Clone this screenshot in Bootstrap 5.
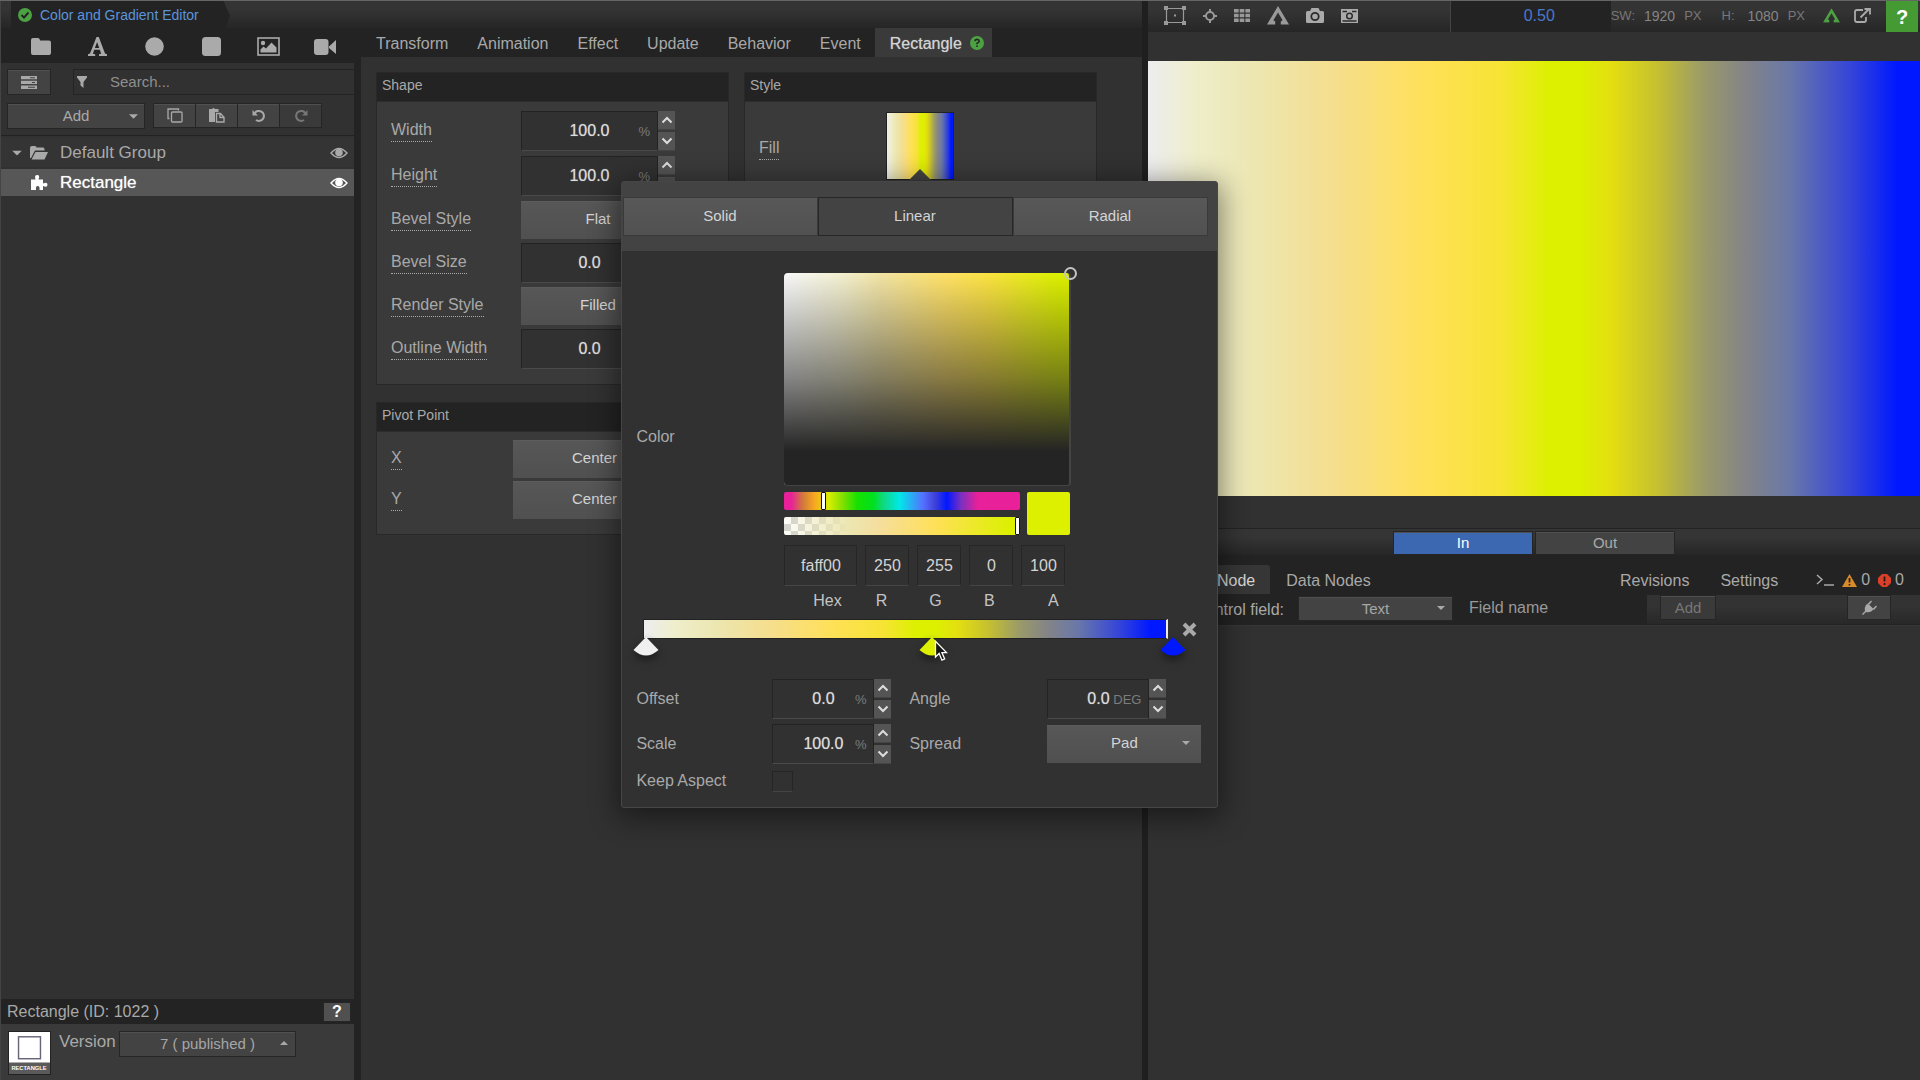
<!DOCTYPE html>
<html lang="en">
<head>
<meta charset="utf-8">
<meta name="viewport" content="width=device-width, initial-scale=1">
<title>Color and Gradient Editor</title>
<link href="https://cdn.jsdelivr.net/npm/bootstrap@5.3.0/dist/css/bootstrap.min.css" rel="stylesheet">
<style>
:root{--deep:#232323;--base:#313131;--panel:#3a3a3a;--line:#1f1f1f;--txt:#a9a9a9;--lite:#d4d4d4;
--ramp:linear-gradient(90deg,#ededf0 0,#efeecb 6%,#ece6b0 14%,#f5de8e 24%,#ffe058 36%,#f6e433 46%,#dcf000 52%,#dcf000 56%,#e4df10 60%,#c5c030 66%,#9a9a6a 72%,#858585 77%,#6a78a8 83%,#3545d8 91%,#0018ff 97%)}
body{background:var(--base);color:var(--txt);font:16px/20px "Liberation Sans",Arial,sans-serif;overflow:hidden}
button,input,select{font:inherit;color:inherit;border-radius:0}
svg{display:block;flex:none;fill:currentColor}
svg.hollow{fill:none}
a{color:inherit;text-decoration:none}
.app{min-height:100vh;border-top:1px solid #666}
.side{flex:0 0 361px;border-left:1px solid #444;border-right:7px solid var(--deep);background:var(--base)}
.mid{flex:781 1 0;min-width:0;background:var(--deep)}
.view{flex:772 1 0;min-width:0;border-left:6px solid #1f1f1f;background:var(--base)}
.strip{height:27px;background:linear-gradient(#343434 30%,#262626);flex:none}
.side .strip{margin-right:-7px;padding-left:10px}
.doc{height:27px;width:219px;background:var(--deep);color:#5c94dc;font-size:14px;padding-left:7px;clip-path:polygon(0 0,97% 0,100% 55%,98% 100%,0 100%)}
.tools{height:35px;background:var(--deep);padding:0 8px 0 12px;margin-right:-7px}
.tools a{flex:1 1 0;display:flex;justify-content:center;padding-top:2px;color:#aaa}
.flatbtn{background:#434343;border:1px solid #252525;box-shadow:inset 0 1px #505050;padding:0;display:flex;align-items:center;justify-content:center}
.flatbtn:disabled{color:#777;background:#3a3a3a}
.row-a{padding:6px 0 0 6px;height:40px}
.listbtn{width:44px;height:26px}
.find{height:26px;border:1px solid #242424;border-right:0;background:var(--base);margin-left:22px;padding-left:3px}
.find input{background:none;border:0;outline:0;min-width:0;padding:0 0 0 23px;font-size:15px}
.find input::placeholder{color:#8f8f8f;opacity:1}
.row-b{height:32px;padding-left:6px}
.addbtn{width:138px;height:26px;position:relative;font-size:15px}
.addbtn svg{position:absolute;right:6px}
.tool4 .flatbtn{width:43px;height:25px;margin-right:-1px}
.hair{height:1px;background:#222}
.tree{height:29px;margin-top:2px;background:#343434;padding:0 6px 0 11px;font-size:17px}
.tree.on{background:#575757;color:#fff;height:27px;text-shadow:0 0 1px #ccc}
.tree.on svg:first-child{margin-left:19px}
.foot-h{height:25px;background:var(--deep);padding:0 3px 0 6px}
.foot-h .flatbtn{width:28px;height:20px;background:#505050;color:#fff;font-weight:700}
.foot-b{height:56px;background:var(--panel);padding:7px 0 0 7px}
.foot-b label{width:68px;font-size:17px;line-height:22px}
.thumb{width:43px;height:44px;background:#fff;color:#fff;border:1px solid #222}
.pick{position:relative;display:block;height:38px}
.pick select{appearance:none;width:100%;height:100%;text-align:center;text-align-last:center;border:0;border-top:1px solid #5c5c5c;background:linear-gradient(#575757,#505050);color:var(--lite);font-size:15px;padding:0 0 2px;outline:0}
.pick::after{content:"";position:absolute;right:11px;top:50%;margin-top:-3px;border:4px solid transparent;border-top-color:currentColor;border-bottom:0}
.pick.up::after{border-top:0;border-bottom:4px solid currentColor}
.pick.dim{height:25px}
.pick.dim.up{height:26px;width:177px}
.pick.dim select{background:#434343;border:1px solid #262626;box-shadow:inset 0 1px #505050;color:#a6a6a6;padding:0}
.pick.dim::after{right:8px}
.tabs a{padding:6px 14px 0 15px;height:29px}
.tabs a.on{background:var(--panel);color:var(--lite);text-shadow:0 0 1px #999}
.desk{background:var(--base);flex:1;padding:15px;gap:17px 15px;align-content:flex-start}
.sheet{border:1px solid #282828;background:var(--panel);flex:0 1 353px;min-width:0}
.sheet h2{height:29px;margin:0;background:var(--deep);font-size:14px;line-height:25px;padding:0 0 0 5px;font-weight:400;border-bottom:1px solid #2c2c2c}
.sheet .inner{padding:6px 14px 14px}
.fieldrow{height:43px;display:grid;grid-template-columns:130px 154px;align-items:center;justify-items:start}
.fieldrow.tall{height:45px}
.fieldrow.pivot{height:41px;grid-template-columns:122px 163px}
.fieldrow>.ctl{width:100%}
.dot{border-bottom:1px dotted #aaa;line-height:22px}
.numf{height:40px;display:flex}
.numf .cell{position:relative;flex:1;min-width:0}
.numf input{width:100%;height:100%;background:var(--base);border:1px solid #232323;border-bottom-color:#4a4a4a;text-align:center;color:#dcdcdc;padding:0;outline:0;text-shadow:0 0 1px #999}
.numf .unit{position:absolute;right:8px;top:11px;font-size:13px;color:#7c7c7c}
.numf .stepper{width:17px;display:flex;flex-direction:column;gap:2px}
.numf .stepper button{flex:1;border:0;padding:0;background:#545454;color:#ddd;display:flex;align-items:center;justify-content:center;border-bottom:1px solid #444}
.sheet .fillrow{padding-top:10px;gap:107px}
.fillrow .dot{margin-top:4px}
.swatchbox{position:relative;width:68px;height:68px;border:1px solid #222}
.swatchbox>button{width:66px;height:66px;border:0;padding:0;display:block;background:var(--ramp)}
.notch{position:absolute;left:22px;bottom:-1px;border:11px solid transparent;border-bottom:11px solid #434343;border-top:0}
.pop{position:absolute;z-index:20;top:68px;left:-266px;width:597px;background:var(--base);border:1px solid #464646;border-radius:3px;box-shadow:0 6px 28px 4px rgba(0,0,0,.45);padding-bottom:14px}
.pop-h{height:69px;background:#434343;padding:15px 9px 0 1px}
.pop-h button{flex:1;height:39px;border:1px solid #3a3a3a;background:linear-gradient(#585858,#515151);color:var(--lite);font-size:15px;padding:0 2px 2px 0}
.pop-h button.on{background:#434343;border-color:#272727}
.pop-b{padding:22px 15px 0 14px}
.lab{flex:none;width:148px;padding-bottom:10px}
.map{position:relative;height:213px;width:287px;border-radius:4px;border-right:2px solid #444;border-bottom:1px solid #444;background:linear-gradient(rgba(36,36,36,0) 0,rgba(36,36,36,.55) 50%,#242424 84%),linear-gradient(90deg,#f8f8fa 0,#f3f0cf 20%,#f2e4a4 34%,#ffe168 56%,#fbe340 72%,#dcf000 96%)}
.ring{position:absolute;right:-8px;top:-6px;width:13px;height:13px;border:2px solid #c4c4c4;border-radius:50%}
.bars{gap:7px;margin-top:6px}
.slide{appearance:none;display:block;width:236px;height:18px;margin:0;border-radius:2px;outline:0}
.slide::-webkit-slider-thumb{appearance:none;width:5px;height:18px;background:#fff;border:1px solid #111;border-radius:1px}
.hue{background:linear-gradient(90deg,#e8209a 3%,#d07a3a 8%,#f8a820 13%,#d8ee00 19%,#80e000 25%,#18e000 31%,#00e020 38%,#10d880 42%,#00e8e8 49%,#5570ff 59%,#4040d8 64%,#0018ff 69%,#7a30c0 75%,#e8209a 82%)}
.alpha{background:linear-gradient(90deg,rgba(240,240,225,.2),#ece6b0 28%,#f5de9e 40%,#ffe058 64%,#dcf000 96%),conic-gradient(#ccc 25%,#fff 0 50%,#ccc 0 75%,#fff 0) 0 0/14px 14px}
.now{width:43px;height:43px;background:#dcf000;border-radius:2px}
.codes{gap:8px;margin-top:10px}
.codes input{width:44px;height:41px;background:var(--base);border:1px solid #262626;border-bottom-color:#454545;text-align:center;color:var(--lite);padding:0;outline:0}
.codes input.hx{width:73px}
.names{padding-left:16px;color:#c4c4c4;margin:5px -30px 0 0}
.names label{width:54px;text-align:center}
.names label:last-child{width:74px}
.track{margin:8px 0 37px 7px;gap:14px}
.stops{position:relative;height:20px;width:525px;background:var(--ramp);border:1px solid #222;border-right:2px solid #eee}
.stop{position:absolute;top:16px;border:0;padding:0;background:none;filter:drop-shadow(0 4px 4px #1a1a1a)}
.cur{position:absolute;left:290px;top:20px}
.opt{height:45px;display:grid;grid-template-columns:136px 137px 138px 154px;align-items:center}
.opt.slim{height:24px;margin-top:3px}
.opt .numf{width:119px}
.tick{appearance:none;width:21px;height:21px;border:1px solid #252525;border-bottom-color:#444;margin:0;display:block}
.vbar{height:31px;background:linear-gradient(#343434 30%,#262626);flex:none;padding:0 0 2px 16px;color:#999}
.vbar .zoomv{width:161px;margin-bottom:-2px;background:var(--deep);border-left:1px solid #444;color:#4a78cc;padding:0 0 2px 73px}
.dims{font-size:13px;color:#777;gap:9px;padding-right:18px}
.dims b{font-weight:400;font-size:14px;color:#858585}
.dims .hh{margin-left:11px;margin-right:4px}
.vbar .helpb{width:32px;height:31px;background:#459a34;color:#fff;font-weight:700;font-size:20px;border:0;padding:0;margin:0 2px -2px 0}
.icons{gap:17px}
.stage{height:435px;margin-top:29px;background:var(--ramp)}
.io{margin-top:32px;height:27px;border-top:1px solid #232323;background:linear-gradient(#353535 30%,#262626);padding-top:2px;gap:2px}
.io .flatbtn{width:140px;height:24px;font-size:15px;color:#aaa}
.io .go{background:#3c68b2;color:#fff}
.low{height:39px;background:var(--deep);padding-top:10px}
.low .tb{height:29px;padding:6px 15px 0 16px}
.low .on{background:#363636;border-radius:3px 3px 0 0;color:var(--lite);padding-left:69px}
.stat{padding:1px 16px 0 23px}
.ctrl{height:32px;background:var(--deep);padding-top:2px;border-bottom:1px solid #363636}
.ctrl label{width:136px;padding-top:4px}
.ctrl .pick{width:155px;margin:0 14px 0 14px}
.ctrl .fname{height:25px;background:var(--deep);border:0;padding:0 0 2px 2px;width:180px;outline:0}
.ctrl .fname::placeholder{color:#999;opacity:1}
.ctrl .rest{height:29px;margin-top:-1px;background:linear-gradient(#333 40%,#282828);flex:1;padding:0 29px 0 13px}
.ctrl .flatbtn{height:25px;width:44px}
.ctrl .flatbtn.wide{width:56px;font-size:15px}
</style>
</head>
<body>
<svg width="0" height="0" class="position-absolute" aria-hidden="true"><defs>
<symbol id="up" viewBox="0 0 12 8"><path d="M1.500 6.500 6 2l4.500 4.500" fill="none" stroke="currentColor" stroke-width="2"/></symbol>
<symbol id="dn" viewBox="0 0 12 8"><path d="M1.500 1.500 6 6l4.500-4.500" fill="none" stroke="currentColor" stroke-width="2"/></symbol>
<symbol id="eye" viewBox="0 0 18 12"><path d="M1 6q8-9 16 0-8 9-16 0z" fill="none" stroke="currentColor" stroke-width="1.400"/><circle cx="9" cy="5.500" r="3.800"/></symbol>
<symbol id="fan" viewBox="0 0 28 20"><path d="M14 1 26.500 14Q14 25 1.500 14z"/></symbol>
<symbol id="logo" viewBox="0 0 22 19"><path d="M11 0 22 18.500h-8.200v-3l1.800-1.200L11 6.500 6.400 14.300l1.800 1.200v3H0z"/></symbol>
<symbol id="caret" viewBox="0 0 10 5"><path d="M0 0h10L5 5z"/></symbol>
</defs></svg>
<div class="app d-flex align-items-stretch">

<aside class="side d-flex flex-column">
  <div class="strip"><a href="#" class="doc d-flex align-items-center"><svg width="14" height="14" viewBox="0 0 14 14" color="#4ca142"><circle cx="7" cy="7" r="7"/><path d="m3.500 7 2.500 2.600L10.500 4.500" fill="none" stroke="#232323" stroke-width="2"/></svg><span class="ps-2">Color and Gradient Editor</span></a></div>
  <nav class="tools d-flex align-items-center">
    <a href="#" aria-label="Group"><svg width="20" height="17" viewBox="0 0 20 17"><path d="M0 2Q0 0 2 0h5q2 0 2 2.500h9q2 0 2 2V15q0 2-2 2H2q-2 0-2-2z"/></svg></a>
    <a href="#" aria-label="Text"><svg width="20" height="19" viewBox="0 0 20 19"><path fill-rule="evenodd" d="M8.500 0h2.300l6.200 16.500 2 .8V19h-8v-1.700l2.200-.6-1.400-4H6.200l-1.300 4 2.300.6V19H0v-1.700l2-.8zm.6 5L6.900 11h4.300z"/></svg></a>
    <a href="#" aria-label="Ellipse"><svg width="19" height="19" viewBox="0 0 19 19"><circle cx="9.500" cy="9.500" r="9.300"/></svg></a>
    <a href="#" aria-label="Rectangle"><svg width="19" height="19" viewBox="0 0 19 19"><rect width="19" height="19" rx="3.500"/></svg></a>
    <a href="#" aria-label="Image"><svg width="23" height="19" viewBox="0 0 23 19"><rect x="1" y="1" width="21" height="17" fill="none" stroke="currentColor" stroke-width="1.600"/><circle cx="6" cy="6" r="2.200"/><path d="M3.500 15.500v-3l3-3 2.500 2 5.500-6 5 5v5z"/></svg></a>
    <a href="#" aria-label="Video"><svg width="22" height="16" viewBox="0 0 22 16"><rect width="14.500" height="16" rx="3"/><path d="M15 7.500 22 1v14l-7-6z"/></svg></a>
  </nav>
  <div class="row-a d-flex">
    <button class="flatbtn listbtn" aria-label="List"><svg width="16" height="13" viewBox="0 0 16 13"><path d="M0 0h16v3.300H0zM0 4.800h16v3.300H0zM0 9.600h16v3.300H0z"/><path d="M9 1.200h5v1H9zM11 6h3v1h-3zM7 10.800h7v1H7z" fill="#434343"/></svg></button>
    <label class="find d-flex align-items-center flex-fill"><svg width="10" height="12" viewBox="0 0 10 12"><path d="M0 0h10v1.500L6.500 6v6L3.500 9.500V6L0 1.500z"/></svg><input class="flex-fill" type="text" placeholder="Search..." aria-label="Search"></label>
  </div>
  <div class="row-b d-flex">
    <button class="flatbtn addbtn me-2"><span>Add</span><svg width="9" height="5"><use href="#caret"/></svg></button>
    <div class="tool4 d-flex">
      <button class="flatbtn" aria-label="Copy"><svg class="hollow" width="16" height="15" viewBox="0 0 16 15" stroke="currentColor" stroke-width="1.300"><rect x="4.500" y="4" width="10.500" height="10" rx="1"/><path d="M2.500 10.500H1V1h10.500v1.500"/></svg></button>
      <button class="flatbtn" aria-label="Paste"><svg width="16" height="15" viewBox="0 0 16 15"><path d="M0 1h3q1.500-2 3 0h3.500v3H6v10H0z"/><path d="M7.500 5.500h4l3.500 3.700V14H7.500zM11 5.500V9.500h4" fill="none" stroke="currentColor" stroke-width="1.400"/></svg></button>
      <button class="flatbtn" aria-label="Undo"><svg width="14" height="14" viewBox="0 0 14 14"><path d="M2.500 4.500A5 5 0 1 1 4 11" fill="none" stroke="currentColor" stroke-width="2"/><path d="M.5 1v5.500H6z"/></svg></button>
      <button class="flatbtn" disabled aria-label="Redo"><svg width="14" height="14" viewBox="0 0 14 14"><path d="M11.500 4.500A5 5 0 1 0 10 11" fill="none" stroke="currentColor" stroke-width="2"/><path d="M13.500 1v5.500H8z"/></svg></button>
    </div>
  </div>
  <div class="hair"></div>
  <a href="#" class="tree d-flex align-items-center"><svg width="10" height="6" viewBox="0 0 10 5"><use href="#caret"/></svg><svg width="18" height="14" viewBox="0 0 18 14" class="ms-2 me-2"><path d="M0 12V2Q0 0 2 0h3q1.500 0 1.500 1.500H13q1.500 0 1.500 2v1H5L1 12z"/><path d="M5.500 6H18l-3.500 7.500H1.500z"/></svg><span class="ps-1 flex-fill">Default Group</span><svg width="18" height="12"><use href="#eye"/></svg></a>
  <a href="#" class="tree on d-flex align-items-center"><svg width="17" height="15" viewBox="0 0 17 15" class="me-2"><path d="M0 4.500h4.500Q3 0 6.200 0T7.500 4.500H12v4q4.500-2 4.500 1.200T12 11v4H8.500q.5-4-1.800-4T5 15H0z"/></svg><span class="flex-fill ps-1">Rectangle</span><svg width="18" height="12"><use href="#eye"/></svg></a>
  <div class="flex-fill"></div>
  <div class="foot-h d-flex align-items-center justify-content-between"><span>Rectangle (ID: 1022 )</span><button class="flatbtn">?</button></div>
  <div class="foot-b d-flex">
    <svg class="thumb" viewBox="0 0 43 44"><rect x="10" y="5" width="23" height="23" fill="none" stroke="#667" stroke-width="1.500"/><path d="M0 32h43v12H0z" fill="#5a5a5a"/><text x="21" y="40" font-size="6" font-weight="700" text-anchor="middle" fill="#fff">RECTANGLE</text></svg>
    <label for="ver" class="ps-2">Version</label>
    <div class="pick dim up"><select id="ver"><option>7 ( published )</option></select></div>
  </div>
</aside>

<main class="mid d-flex flex-column">
  <div class="strip"></div>
  <nav class="tabs d-flex">
    <a href="#">Transform</a><a href="#">Animation</a><a href="#">Effect</a><a href="#">Update</a><a href="#">Behavior</a><a href="#">Event</a>
    <a href="#" class="on d-flex pe-2">Rectangle<svg width="14" height="14" viewBox="0 0 14 14" class="ms-2" style="margin-top:2px" color="#4ca142"><circle cx="7" cy="7" r="7"/><path d="M4.800 5.200Q5 3.400 7 3.400T9.200 5.200Q9.200 6.400 7 7.300v1M7 9.500v1.600" fill="none" stroke="#262626" stroke-width="1.600"/></svg></a>
  </nav>
  <div class="desk d-flex flex-wrap">
    <section class="sheet">
      <h2>Shape</h2>
      <div class="inner">
        <div class="fieldrow tall"><label class="dot" for="w">Width</label><div class="ctl numf"><div class="cell"><input id="w" value="100.0"><span class="unit">%</span></div><div class="stepper"><button aria-label="Up"><svg width="12" height="8"><use href="#up"/></svg></button><button aria-label="Down"><svg width="12" height="8"><use href="#dn"/></svg></button></div></div></div>
        <div class="fieldrow tall"><label class="dot" for="h">Height</label><div class="ctl numf"><div class="cell"><input id="h" value="100.0"><span class="unit">%</span></div><div class="stepper"><button aria-label="Up"><svg width="12" height="8"><use href="#up"/></svg></button><button aria-label="Down"><svg width="12" height="8"><use href="#dn"/></svg></button></div></div></div>
        <div class="fieldrow"><label class="dot" for="bs">Bevel Style</label><div class="ctl pick"><select id="bs"><option>Flat</option></select></div></div>
        <div class="fieldrow"><label class="dot" for="bz">Bevel Size</label><div class="ctl numf"><div class="cell"><input id="bz" value="0.0"></div><div class="stepper"></div></div></div>
        <div class="fieldrow"><label class="dot" for="rs">Render Style</label><div class="ctl pick"><select id="rs"><option>Filled</option></select></div></div>
        <div class="fieldrow"><label class="dot" for="ow">Outline Width</label><div class="ctl numf"><div class="cell"><input id="ow" value="0.0"></div><div class="stepper"></div></div></div>
      </div>
    </section>
    <section class="sheet">
      <h2>Style</h2>
      <div class="inner fillrow d-flex align-items-center">
        <label class="dot" for="fill">Fill</label>
        <div class="swatchbox"><button id="fill" aria-label="Fill"></button><i class="notch"></i>
          <div class="pop" role="dialog" aria-label="Gradient">
            <div class="pop-h d-flex"><button>Solid</button><button class="on">Linear</button><button>Radial</button></div>
            <div class="pop-b">
              <div class="d-flex align-items-center">
                <div class="lab">Color</div>
                <div>
                  <div class="map"><i class="ring"></i></div>
                  <div class="bars d-flex"><div class="bars d-flex flex-column mt-0"><input class="slide hue" type="range" value="16" aria-label="Hue"><input class="slide alpha" type="range" value="100" aria-label="Alpha"></div><div class="now"></div></div>
                  <div class="codes d-flex"><input class="hx" id="c0" value="faff00"><input id="c1" value="250"><input id="c2" value="255"><input id="c3" value="0"><input id="c4" value="100"></div>
                  <div class="names d-flex"><label for="c0">Hex</label><label for="c1">R</label><label for="c2">G</label><label for="c3">B</label><label for="c4">A</label></div>
                </div>
              </div>
              <div class="track d-flex align-items-center">
                <div class="stops">
                  <button class="stop" style="left:-12px;color:#f0f0f0" aria-label="Stop 1"><svg width="28" height="20"><use href="#fan"/></svg></button>
                  <button class="stop" style="left:274px;color:#dcf000" aria-label="Stop 2"><svg width="28" height="20"><use href="#fan"/></svg></button>
                  <button class="stop" style="left:515px;color:#0018ff" aria-label="Stop 3"><svg width="28" height="20"><use href="#fan"/></svg></button>
                  <svg class="cur" width="14" height="22" viewBox="0 0 15 24"><path d="M1.500 1.500v17l4-3.800 3 7.300 3-1.300-3-7h5z" fill="#161616" stroke="#fff" stroke-width="1.400"/></svg>
                </div>
                <button class="border-0 bg-transparent p-0" aria-label="Delete stop"><svg width="15" height="15" viewBox="0 0 15 15"><path d="m2 2 11 11M13 2 2 13" stroke="currentColor" stroke-width="4"/></svg></button>
              </div>
              <div class="opt"><label for="of">Offset</label><div class="numf"><div class="cell"><input id="of" value="0.0"><span class="unit">%</span></div><div class="stepper"><button aria-label="Up"><svg width="12" height="8"><use href="#up"/></svg></button><button aria-label="Down"><svg width="12" height="8"><use href="#dn"/></svg></button></div></div>
                <label for="an">Angle</label><div class="numf"><div class="cell"><input id="an" value="0.0"><span class="unit">DEG</span></div><div class="stepper"><button aria-label="Up"><svg width="12" height="8"><use href="#up"/></svg></button><button aria-label="Down"><svg width="12" height="8"><use href="#dn"/></svg></button></div></div></div>
              <div class="opt"><label for="sc">Scale</label><div class="numf"><div class="cell"><input id="sc" value="100.0"><span class="unit">%</span></div><div class="stepper"><button aria-label="Up"><svg width="12" height="8"><use href="#up"/></svg></button><button aria-label="Down"><svg width="12" height="8"><use href="#dn"/></svg></button></div></div>
                <label for="sp">Spread</label><div class="pick"><select id="sp"><option>Pad</option></select></div></div>
              <div class="opt slim"><label for="ka">Keep Aspect</label><input class="tick" type="checkbox" id="ka"></div>
            </div>
          </div>
        </div>
      </div>
    </section>
    <section class="sheet">
      <h2>Pivot Point</h2>
      <div class="inner">
        <div class="fieldrow pivot"><label class="dot" for="px">X</label><div class="ctl pick"><select id="px"><option>Center</option></select></div></div>
        <div class="fieldrow pivot"><label class="dot" for="py">Y</label><div class="ctl pick"><select id="py"><option>Center</option></select></div></div>
      </div>
    </section>
  </div>
</main>

<section class="view d-flex flex-column">
  <div class="vbar d-flex align-items-center">
    <div class="icons d-flex align-items-center me-auto">
    <svg width="22" height="19" viewBox="0 0 22 19"><path d="M2.500 2.500h17v14h-17z" fill="none" stroke="currentColor" stroke-width="1.200"/><path d="M0 0h4v4H0zM18 0h4v4h-4zM0 15h4v4H0zM18 15h4v4h-4zM10 8.500h2v2h-2z"/></svg>
    <svg width="14" height="14" viewBox="0 0 14 14"><circle cx="7" cy="7" r="4" fill="none" stroke="currentColor" stroke-width="2"/><path d="M6 0h2v4H6zM6 10h2v4H6zM0 6h4v2H0zM10 6h4v2h-4z"/></svg>
    <svg width="16" height="13" viewBox="0 0 16 13"><path d="M0 0h4.600v3.600H0zM5.700 0h4.600v3.600H5.700zM11.400 0H16v3.600h-4.600zM0 4.700h4.600v3.600H0zM5.700 4.700h4.600v3.600H5.700zM11.400 4.700H16v3.600h-4.600zM0 9.400h4.600V13H0zM5.700 9.400h4.600V13H5.700zM11.400 9.400H16V13h-4.600z"/></svg>
    <svg width="22" height="19"><use href="#logo"/></svg>
    <svg width="18" height="15" viewBox="0 0 18 15" color="#aaa"><path d="M0 4.500Q0 3 1.500 3H4l1.500-3h7L14 3h2.500Q18 3 18 4.500v9q0 1.500-1.500 1.500h-15Q0 15 0 13.500z"/><circle cx="9" cy="8.500" r="3.700" fill="none" stroke="#2c2c2c" stroke-width="1.800"/></svg>
    <svg width="17" height="14" viewBox="0 0 17 14" color="#aaa"><path d="M0 0h17v14H0z"/><path d="M1.500 2.500H6M11 2.500h4.500M1.500 12h14" stroke="#2c2c2c" stroke-width="1.300"/><circle cx="8.500" cy="7" r="2.800" fill="none" stroke="#2c2c2c" stroke-width="1.500"/></svg>
    </div>
    <div class="zoomv align-self-stretch d-flex align-items-center">0.50</div>
    <div class="dims d-flex align-items-center"><span>SW:</span><b>1920</b><span>PX</span><span class="hh">H:</span><b>1080</b><span>PX</span></div>
    <svg width="17" height="15" viewBox="0 0 22 19" color="#4ca142"><use href="#logo"/></svg>
    <svg class="hollow" style="margin:0 15px 0 14px" width="17" height="15" viewBox="0 0 17 15" color="#aaa" stroke="currentColor" stroke-width="1.800"><path d="M9 2H3Q1 2 1 4v8q0 2 2 2h7q2 0 2-2V9"/><path d="m6.500 9.500 8-8M10.500 1H16v5.500"/></svg>
    <button class="helpb">?</button>
  </div>
  <div class="stage"></div>
  <div class="io d-flex justify-content-center"><button class="flatbtn go">In</button><button class="flatbtn">Out</button></div>
  <nav class="low d-flex"><a href="#" class="tb on">Node</a><a href="#" class="tb me-auto">Data Nodes</a><a href="#" class="tb">Revisions</a><a href="#" class="tb">Settings</a>
    <div class="stat d-flex align-items-center"><svg class="hollow me-2" width="18" height="12" viewBox="0 0 18 12" stroke="currentColor" stroke-width="1.500"><path d="m1 1 5 4.500L1 10"/><path d="M8 11h10"/></svg>
    <svg class="me-1" width="15" height="13" viewBox="0 0 15 13" color="#d98a2b"><path d="M7.500 0 15 13H0z"/><path d="M7.500 4v4.500M7.500 10v1.500" stroke="#232323" stroke-width="1.700"/></svg><span class="me-2">0</span>
    <svg class="me-1" width="13" height="13" viewBox="0 0 13 13" color="#d8402a"><path d="M4 0h5l4 4v5l-4 4H4L0 9V4z"/><path d="M6.500 2.500v5M6.500 9v2" stroke="#2a1512" stroke-width="1.700"/></svg><span>0</span></div></nav>
  <div class="ctrl d-flex"><label for="cf" class="text-end">Control field:</label><div class="pick dim"><select id="cf"><option>Text</option></select></div><input class="fname" placeholder="Field name" aria-label="Field name">
    <div class="rest d-flex justify-content-between"><button class="flatbtn wide" disabled>Add</button><button class="flatbtn" aria-label="Plug"><svg width="15" height="15" viewBox="0 0 15 15"><path d="M0 14 3 11Q2 7 5 4l6 6q-3 3-7 2l-3 3zM5.500 4 9 0.500l1 1L7.500 4.500zM10.500 9 14 5.500l1 1L12 10z"/><path d="m6 3.500 5.500 5.500-2 1.500-5-5z"/></svg></button></div></div>
</section>
</div>
<script src="https://cdn.jsdelivr.net/npm/bootstrap@5.3.0/dist/js/bootstrap.bundle.min.js"></script>
</body>
</html>
